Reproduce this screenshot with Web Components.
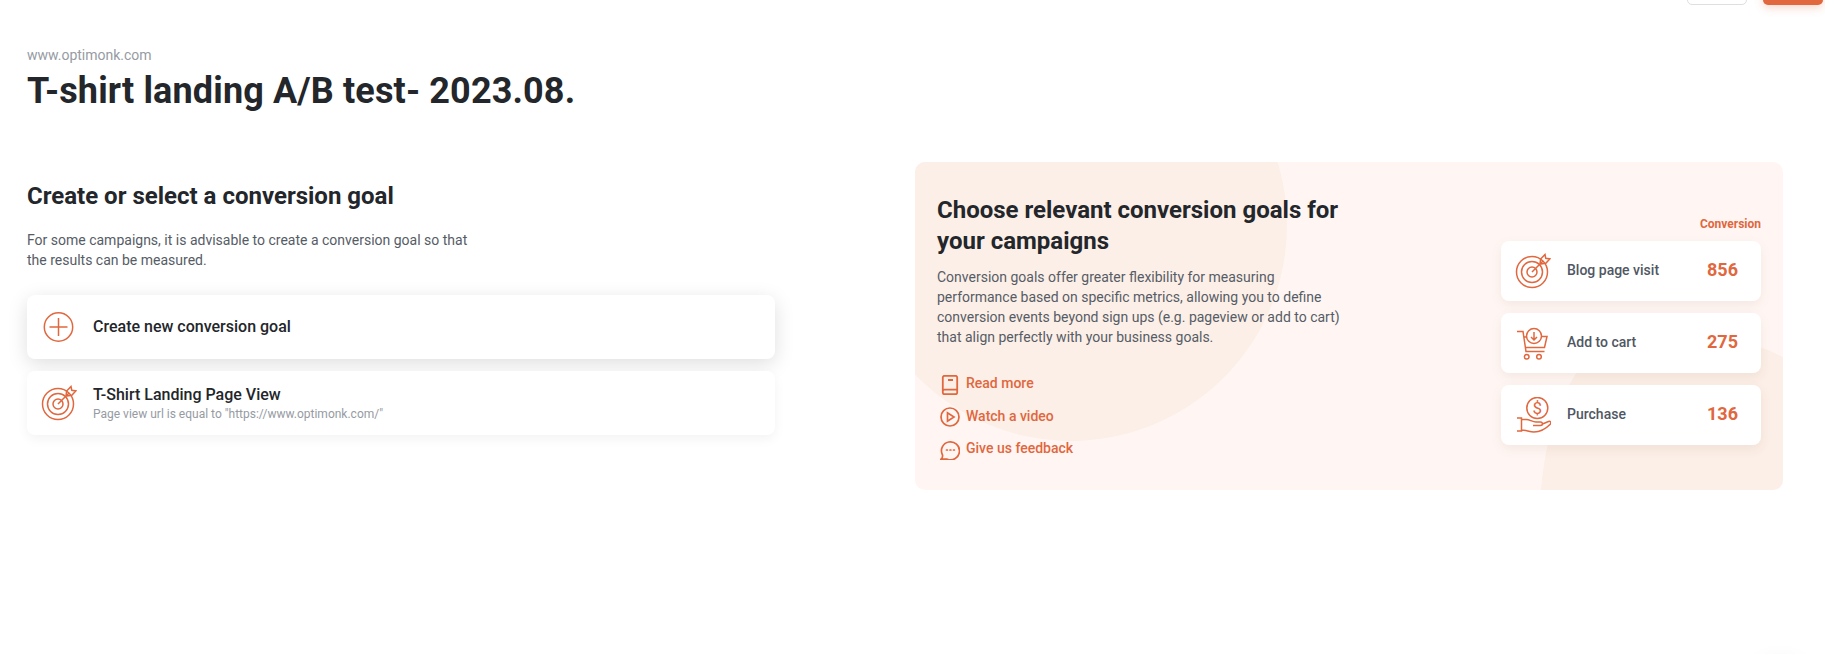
<!DOCTYPE html>
<html lang="en">
<head>
<meta charset="utf-8">
<title>Conversion goal</title>
<style>
html, body { margin: 0; background: #fff; }
body { font-family: Roboto, "Liberation Sans", sans-serif; color: #23262a; overflow: hidden; height: 654px; }
</style>
</head>
<body>
<op-topbar></op-topbar>
<op-page>
  <span slot="domain">www.optimonk.com</span>
  <span slot="title">T-shirt landing A/B test- 2023.08.</span>
  <op-goals slot="left">
    <op-goal-card raised icon="plus" name="Create new conversion goal"></op-goal-card>
    <op-goal-card icon="target" name="T-Shirt Landing Page View" detail='Page view url is equal to "https://www.optimonk.com/"'></op-goal-card>
  </op-goals>
  <op-info slot="right">
    <op-link icon="book">Read more</op-link>
    <op-link icon="play">Watch a video</op-link>
    <op-link icon="chat">Give us feedback</op-link>
    <op-stat slot="stats" icon="target" label="Blog page visit" value="856"></op-stat>
    <op-stat slot="stats" icon="cart" label="Add to cart" value="275"></op-stat>
    <op-stat slot="stats" icon="hand" label="Purchase" value="136"></op-stat>
  </op-info>
</op-page>
<op-corner></op-corner>

<script>
const ORANGE = "#e0673e";

// icons, all stroked with the orange from svgStyle
const ICONS = {
  plus: `<svg width="36" height="36" viewBox="0 0 36 36"><circle cx="17.500" cy="18" r="14.200"/><path d="M17.500 9v18M8.500 18h18"/></svg>`,
  target: `<svg width="36" height="36" viewBox="0 0 36 36"><circle cx="17" cy="19" r="15.500"/><circle cx="17" cy="19" r="10.500"/><circle cx="17" cy="19" r="5"/><path d="M17 19 28 8M25 11l.6-5L30 1.500l.8 3.800 4 .6-4 4.300z"/></svg>`,
  cart: `<svg width="36" height="33" viewBox="10 6 36 33"><path d="M12 10.500h6l3 20h18.500M19 16h3M36.500 15.500H42L39.500 26.500H20.500"/><circle cx="29" cy="15" r="7.500"/><path d="M29 11v8M26 16l3 3 3-3"/><circle cx="21.700" cy="35.700" r="2.300"/><circle cx="34" cy="35.700" r="2.300"/></svg>`,
  hand: `<svg width="36" height="37" viewBox="10 77 36 37"><circle cx="32.300" cy="88" r="10.500"/><text x="32.300" y="94" text-anchor="middle" font-family="Roboto, sans-serif" font-size="17" font-weight="400" stroke="none" fill="#e0673e">$</text><path d="M12 98h4.500v13H12M16.500 99.500h5c3 0 6 2.500 9.500 2.500h4.500c2.500 0 2.500 3.500 0 3.500H28M37.500 104l6-2.500c2.200-.8 3.200 1.300 1.500 3-4 4-10 7.500-16 7.500-4.500 0-8-2-12.500-2"/></svg>`,
  book: `<svg width="20" height="20" viewBox="0 0 20 20"><path d="M2.800 16.300V2.500A1.700 1.700 0 0 1 4.500.8h11a1.700 1.700 0 0 1 1.700 1.700v15a1.700 1.700 0 0 1-1.700 1.700h-11a1.700 1.700 0 0 1-1.700-1.700zM2.800 16.300a1.700 1.700 0 0 1 1.700-1.700h12.700M8 5h5" stroke-width="1.800"/></svg>`,
  play: `<svg width="20" height="20" viewBox="0 0 20 20"><circle cx="10" cy="10" r="9" stroke-width="1.700"/><path d="M7.500 5.800v8.400l6.500-4.200z" stroke-width="1.700"/></svg>`,
  chat: `<svg width="20" height="20" viewBox="0 0 20 20"><path d="M1 19.200h6.200A9 9 0 1 0 2.500 15c.2.900-.2 3-1.500 4.200z" stroke-width="1.700"/><path d="M6.500 10h.9M10 10h.9M13.500 10h.9" stroke-width="1.700" stroke-linecap="round"/></svg>`
};

function define(tag, html, setup) {
  const template = document.createElement("template");
  template.innerHTML = html;
  customElements.define(tag, class extends HTMLElement {
    constructor() {
      super();
      this.attachShadow({mode: "open"});
      this.shadowRoot.appendChild(template.content.cloneNode(true));
    }
    connectedCallback() {
      if (setup) setup(this, this.shadowRoot);
    }
  });
}

const svgStyle = `svg{display:block;fill:none;stroke:${ORANGE};stroke-width:1.500;flex:none}`;

define("op-topbar", `
<style>
:host{display:flex;justify-content:flex-end;align-items:flex-end;gap:16px;height:5px;padding-right:2px}
button{height:40px;width:60px;flex:none;box-sizing:border-box;border-radius:5px;padding:0}
.ghost{background:#fff;border:1px solid #dedfe2}
.main{background:${ORANGE};border:0;box-shadow:0 3px 8px rgba(224,100,59,.25);height:40px}
</style>
<button class="ghost" aria-label="Back"></button><button class="main" aria-label="Next"></button>`);

define("op-page", `
<style>
:host{display:block;padding:40px 42px 0 27px}
.domain{font-size:14px;line-height:21px;color:#969ba3}
h1{margin:4px 0 49px;font-size:36px;line-height:43px;font-weight:700;letter-spacing:.14px;color:#23262a}
.row{display:grid;grid-template-columns:748px 868px;column-gap:140px;align-items:start}
</style>
<div class="domain"><slot name="domain"></slot></div>
<h1><slot name="title"></slot></h1>
<div class="row"><slot name="left"></slot><slot name="right"></slot></div>`);

define("op-goals", `
<style>
:host{display:block;padding-top:19px}
h2{margin:0 0 18px;font-size:24px;line-height:31px;font-weight:700;color:#23262a}
p{margin:0 0 25px;font-size:14px;line-height:20px;color:#565c66;max-width:450px}
.list{display:flex;flex-direction:column;gap:12px}
</style>
<h2>Create or select a conversion goal</h2>
<p>For some campaigns, it is advisable to create a conversion goal so that the results can be measured.</p>
<div class="list"><slot></slot></div>`);

define("op-goal-card", `
<style>
:host{display:flex;align-items:center;gap:16px;height:64px;padding-left:14px;background:#fff;border-radius:8px;box-shadow:0 4px 12px rgba(0,0,0,.05)}
:host([raised]){box-shadow:0 5px 20px rgba(0,0,0,.13)}
${svgStyle}
.name{font-size:16px;line-height:22px;font-weight:500;color:#23262a}
:host([detail]) .name{padding-top:1px;margin-bottom:-1px}
.detail{font-size:12px;line-height:18px;color:#969ba3}
.detail:empty{display:none}
</style>
<span class="ic"></span>
<div><div class="name"></div><div class="detail"></div></div>`, (el, root) => {
  root.querySelector(".ic").innerHTML = ICONS[el.getAttribute("icon")];
  root.querySelector(".name").textContent = el.getAttribute("name");
  root.querySelector(".detail").textContent = el.getAttribute("detail") || "";
});

define("op-info", `
<style>
:host{display:flex;justify-content:space-between;position:relative;overflow:hidden;height:328px;box-sizing:border-box;padding:0 22px;background:#fff6f3;border-radius:10px}
.bg{position:absolute;inset:0}
.copy,.side{position:relative}
.copy{width:420px;padding-top:33px}
h2{margin:0 0 10px;font-size:24px;line-height:31px;font-weight:700;color:#23262a}
p{margin:0 0 20px;font-size:14px;line-height:20px;color:#565c66}
.side{width:260px;padding-top:53px}
.side h3{margin:0 0 8px;font-size:12px;line-height:18px;font-weight:700;text-align:right;color:${ORANGE}}
.stats{display:flex;flex-direction:column;gap:12px}
</style>
<svg class="bg" width="868" height="328" viewBox="0 0 868 328">
  <circle cx="156" cy="63" r="216" fill="#fcefe7"/>
  <path d="M626 328C630 278 645 228 670 200C725 168 805 163 868 195V328Z" fill="#fcefe7"/>
</svg>
<div class="copy">
  <h2>Choose relevant conversion goals for your campaigns</h2>
  <p>Conversion goals offer greater flexibility for measuring performance based on specific metrics, allowing you to define conversion events beyond sign ups (e.g. pageview or add to cart) that align perfectly with your business goals.</p>
  <slot></slot>
</div>
<div class="side">
  <h3>Conversion</h3>
  <div class="stats"><slot name="stats"></slot></div>
</div>`);

define("op-link", `
<style>
:host{display:flex;align-items:center;gap:6px;height:32.500px;padding-left:3px;font-size:14px;font-weight:500;color:${ORANGE}}
.ic{padding-top:3px}
${svgStyle}
</style>
<span class="ic"></span><slot></slot>`, (el, root) => {
  root.querySelector(".ic").innerHTML = ICONS[el.getAttribute("icon")];
});

define("op-stat", `
<style>
:host{display:flex;align-items:center;height:60px;padding:0 23px 0 14px;background:#fff;border-radius:8px;box-shadow:0 4px 12px rgba(120,60,30,.08)}
${svgStyle}
.label{margin-left:16px;flex:1;padding-bottom:2px;font-size:14px;font-weight:500;color:#505763}
.value{padding-bottom:3px;font-size:18px;font-weight:700;color:${ORANGE}}
</style>
<span class="ic"></span><span class="label"></span><span class="value"></span>`, (el, root) => {
  root.querySelector(".ic").innerHTML = ICONS[el.getAttribute("icon")];
  root.querySelector(".label").textContent = el.getAttribute("label");
  root.querySelector(".value").textContent = el.getAttribute("value");
});

// faint shadow of the chat bubble sitting just below the fold
define("op-corner", `
<style>
:host{position:fixed;left:1750px;top:660px;width:60px;height:60px;border-radius:50%;box-shadow:0 0 22px rgba(0,0,0,.06)}
</style>`);
</script>
</body>
</html>
